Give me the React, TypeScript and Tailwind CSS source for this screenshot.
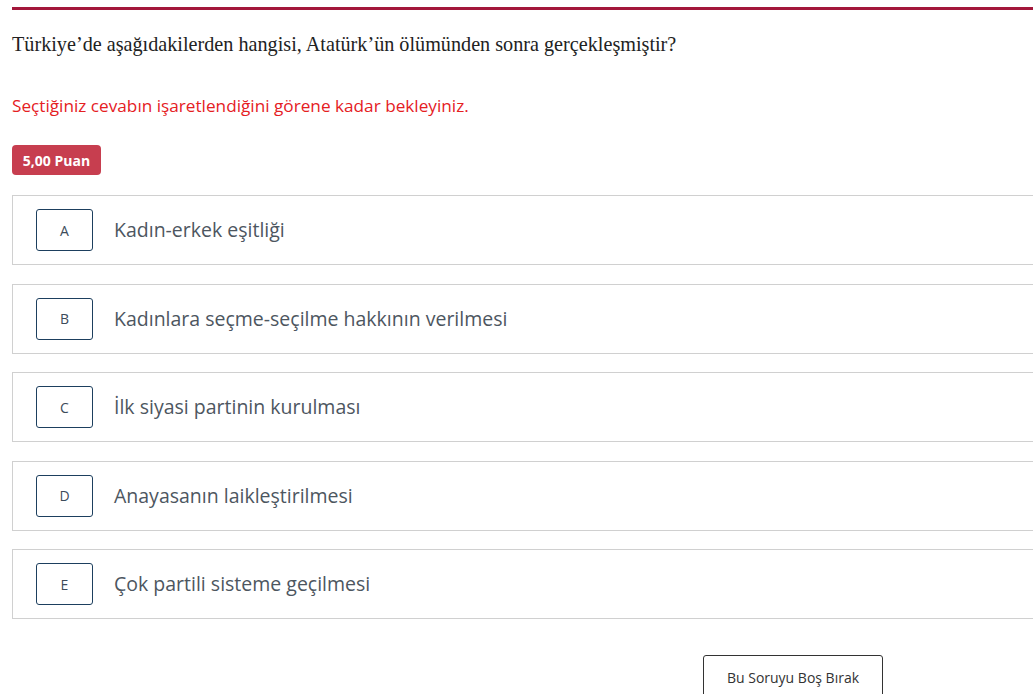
import React from "react";

const options = [
  { l: "A", t: "Kadın-erkek eşitliği" },
  { l: "B", t: "Kadınlara seçme-seçilme hakkının verilmesi" },
  { l: "C", t: "İlk siyasi partinin kurulması" },
  { l: "D", t: "Anayasanın laikleştirilmesi" },
  { l: "E", t: "Çok partili sisteme geçilmesi" },
];

export default function App() {
  return (
    <div className="w-[1033px] h-[694px] overflow-hidden bg-white" style={{ fontFamily: "'Open Sans', sans-serif" }}>
      <div className="pl-[12px] pt-[7px] w-[1100px]">
        <div className="h-[3px] bg-[#a3173b]" />
        <div className="mt-[21px] text-[20.2px] leading-[26px] text-[#222]" style={{ fontFamily: "'Liberation Serif', serif" }}>
          Türkiye’de aşağıdakilerden hangisi, Atatürk’ün ölümünden sonra gerçekleşmiştir?
        </div>
        <div className="mt-[37px] text-[17.2px] leading-[24px] text-[#e5201f]">
          Seçtiğiniz cevabın işaretlendiğini görene kadar bekleyiniz.
        </div>
        <div className="mt-[27px] inline-flex items-center justify-center w-[89px] h-[30px] rounded-[4px] bg-[#c73e4f] text-white text-[14px] font-bold">
          5,00 Puan
        </div>
        <div className="mt-[20px] flex flex-col gap-[18.5px]">
          {options.map((o) => (
            <div key={o.l} className="h-[70px] border border-[#d0d0d0] flex items-center pl-[23px]">
              <div className="w-[57px] h-[42px] border border-[#1d3f5e] rounded-[3px] flex items-center justify-center text-[14px] text-[#3d4b5a]">
                {o.l}
              </div>
              <div className="ml-[21px] text-[19.5px] text-[#4d565f]">{o.t}</div>
            </div>
          ))}
        </div>
        <div className="mt-[36px] ml-[691px] w-[180px] h-[45px] border border-[#333] rounded-[3px] flex items-center justify-center text-[14px] text-[#333]">
          Bu Soruyu Boş Bırak
        </div>
      </div>
    </div>
  );
}
